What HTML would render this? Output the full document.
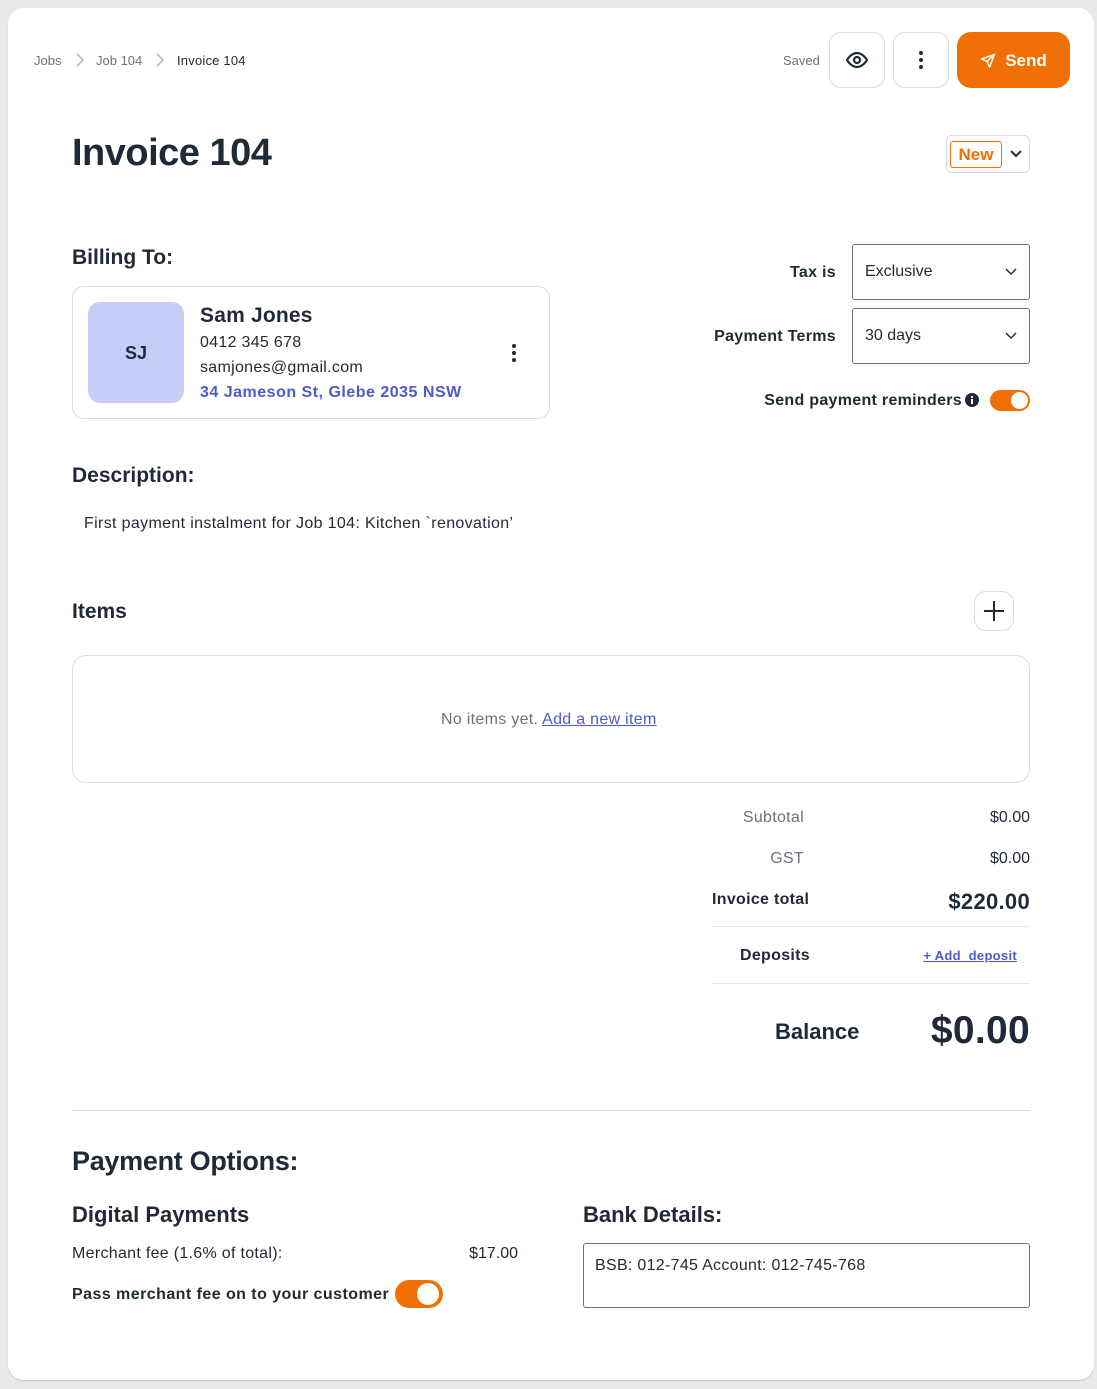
<!DOCTYPE html>
<html><head><meta charset="utf-8"><style>
*{box-sizing:border-box;margin:0;padding:0}
body{width:1097px;height:1389px;background:#e8e8ea;font-family:"Liberation Sans",Arial,sans-serif;color:#1f2937;position:relative;overflow:hidden}
.card{position:absolute;left:8px;top:8px;width:1086px;height:1372px;background:#fff;border-radius:16px;box-shadow:0 1px 1px #c8c8cc}
.a{position:absolute;white-space:nowrap}
.btn{position:absolute;border:1px solid #d9dbe0;border-radius:12px;background:#fff;display:flex;align-items:center;justify-content:center}
.sel{position:absolute;left:852px;width:178px;height:56px;border:1px solid #6b7280;border-radius:3px;font-size:16px;padding:0 12px;display:flex;align-items:center;justify-content:space-between;color:#1f2937}
.tog{position:absolute;background:#f07005;border-radius:20px}
.tog i{position:absolute;background:#fff;border-radius:50%}
.b{font-weight:bold}
.ls{letter-spacing:0.3px}
</style></head><body>
<div class="card"></div>
<div class="a" style="left:34px;top:53px;font-size:13px;color:#6b7280">Jobs</div>
<svg class="a" style="left:74px;top:52px" width="12" height="16"><path d="M3 2l6 6-6 6" stroke="#b0b4bb" stroke-width="1.5" fill="none"/></svg>
<div class="a" style="left:96px;top:53px;font-size:13px;color:#6b7280">Job 104</div>
<svg class="a" style="left:154px;top:52px" width="12" height="16"><path d="M3 2l6 6-6 6" stroke="#b0b4bb" stroke-width="1.5" fill="none"/></svg>
<div class="a" style="left:177px;top:53px;font-size:13px;color:#1f2937;letter-spacing:0.2px">Invoice 104</div>

<div class="a" style="left:783px;top:53px;font-size:13px;color:#6b7280">Saved</div>
<div class="btn" style="left:829px;top:32px;width:56px;height:56px"><svg width="24" height="24" viewBox="0 0 24 24"><path d="M2 12s4-7 10-7 10 7 10 7-4 7-10 7S2 12 2 12z" stroke="#1f2937" stroke-width="2.2" fill="none"/><circle cx="12" cy="12" r="3" stroke="#1f2937" stroke-width="2.2" fill="none"/></svg></div>
<div class="btn" style="left:893px;top:32px;width:56px;height:56px"><svg width="6" height="20"><circle cx="3" cy="3" r="2" fill="#1f2937"/><circle cx="3" cy="10" r="2" fill="#1f2937"/><circle cx="3" cy="17" r="2" fill="#1f2937"/></svg></div>
<div class="a" style="left:957px;top:32px;width:113px;height:56px;background:#f07005;border-radius:14px;color:#fff;font-size:17px;font-weight:bold;display:flex;align-items:center;justify-content:center;gap:9px;padding-top:1px"><svg width="16" height="16" viewBox="0 0 16 16"><path d="M14.5 1.5L1.5 6l5.5 2.5L9.5 14z M7 8.5L14.5 1.5" stroke="#fff" stroke-width="1.5" fill="none" stroke-linejoin="round"/></svg>Send</div>

<div class="a b" style="left:72px;top:132px;font-size:38px;letter-spacing:-0.5px;color:#1f2937">Invoice 104</div>
<div class="a" style="left:946px;top:135px;width:84px;height:38px;border:1px solid #d9dbe0;border-radius:6px"></div>
<div class="a b" style="left:950px;top:141px;width:52px;height:27px;border:1px solid #f07005;border-radius:3px;color:#f07005;font-size:17px;text-align:center;line-height:25px">New</div>
<svg class="a" style="left:1009px;top:149px" width="14" height="10"><path d="M2 2l5 5 5-5" stroke="#1f2937" stroke-width="2" fill="none"/></svg>

<div class="a b" style="left:72px;top:246px;font-size:21px">Billing To:</div>
<div class="a" style="left:72px;top:286px;width:478px;height:133px;border:1px solid #d9dbe0;border-radius:12px"></div>
<div class="a b" style="left:88px;top:302px;width:96px;height:101px;background:#c7cdf7;border-radius:12px;font-size:18px;display:flex;align-items:center;justify-content:center;padding-top:2px">SJ</div>
<div class="a b" style="left:200px;top:304px;font-size:21px;letter-spacing:0.2px">Sam Jones</div>
<div class="a ls" style="left:200px;top:334px;font-size:16px">0412 345 678</div>
<div class="a ls" style="left:200px;top:359px;font-size:16px">samjones@gmail.com</div>
<div class="a b" style="left:200px;top:384px;font-size:16px;color:#5059c9;letter-spacing:0.5px">34 Jameson St, Glebe 2035 NSW</div>
<svg class="a" style="left:510px;top:343px" width="8" height="20"><circle cx="4" cy="3" r="2" fill="#1f2937"/><circle cx="4" cy="10" r="2" fill="#1f2937"/><circle cx="4" cy="17" r="2" fill="#1f2937"/></svg>

<div class="a b ls" style="right:261px;top:264px;font-size:16px">Tax is</div>
<div class="sel" style="top:244px">Exclusive<svg width="12" height="8"><path d="M1 1l5 5 5-5" stroke="#1f2937" stroke-width="1.4" fill="none"/></svg></div>
<div class="a b ls" style="right:261px;top:328px;font-size:16px">Payment Terms</div>
<div class="sel" style="top:308px">30 days<svg width="12" height="8"><path d="M1 1l5 5 5-5" stroke="#1f2937" stroke-width="1.4" fill="none"/></svg></div>
<div class="a b ls" style="right:135px;top:392px;font-size:16px">Send payment reminders</div>
<svg class="a" style="left:965px;top:393px" width="14" height="14"><circle cx="7" cy="7" r="7" fill="#1f2937"/><rect x="6" y="6" width="2" height="5" fill="#fff"/><circle cx="7" cy="4" r="1.1" fill="#fff"/></svg>
<div class="tog" style="left:990px;top:390px;width:40px;height:21px"><i style="left:21px;top:2px;width:17px;height:17px"></i></div>

<div class="a b" style="left:72px;top:464px;font-size:21px">Description:</div>
<div class="a" style="left:84px;top:515px;font-size:16px;letter-spacing:0.35px">First payment instalment for Job 104: Kitchen `renovation’</div>

<div class="a b" style="left:72px;top:600px;font-size:21px">Items</div>
<div class="btn" style="left:974px;top:591px;width:40px;height:40px;border-radius:12px"><svg width="22" height="22"><path d="M11 1v20M1 11h20" stroke="#1f2937" stroke-width="2"/></svg></div>
<div class="a" style="left:72px;top:655px;width:958px;height:128px;border:1px solid #d9dbe0;border-radius:14px"></div>
<div class="a" style="left:441px;top:711px;font-size:16px;color:#6b7280;letter-spacing:0.3px">No items yet. <span style="color:#5059c9;text-decoration:underline">Add a new item</span></div>

<div class="a ls" style="right:293px;top:809px;font-size:16px;color:#6b7280">Subtotal</div>
<div class="a" style="right:67px;top:809px;font-size:16px">$0.00</div>
<div class="a ls" style="right:293px;top:850px;font-size:16px;color:#6b7280">GST</div>
<div class="a" style="right:67px;top:850px;font-size:16px">$0.00</div>
<div class="a b ls" style="left:712px;top:891px;font-size:16px">Invoice total</div>
<div class="a b" style="right:67px;top:889px;font-size:22px;letter-spacing:0.3px">$220.00</div>
<div class="a" style="left:712px;top:926px;width:318px;height:1px;background:#e5e7eb"></div>
<div class="a b ls" style="left:740px;top:947px;font-size:16px">Deposits</div>
<div class="a b" style="right:80px;top:948px;font-size:13px;color:#5059c9;text-decoration:underline;letter-spacing:0.3px">+ Add&nbsp; deposit</div>
<div class="a" style="left:712px;top:983px;width:318px;height:1px;background:#e5e7eb"></div>
<div class="a b" style="left:775px;top:1019px;font-size:22px">Balance</div>
<div class="a b" style="right:67px;top:1009px;font-size:39px;letter-spacing:0.3px">$0.00</div>

<div class="a" style="left:72px;top:1110px;width:958px;height:1px;background:#d9dbe0"></div>
<div class="a b" style="left:72px;top:1146px;font-size:27px;letter-spacing:-0.3px">Payment Options:</div>
<div class="a b" style="left:72px;top:1202px;font-size:22px">Digital Payments</div>
<div class="a ls" style="left:72px;top:1245px;font-size:16px">Merchant fee (1.6% of total):</div>
<div class="a" style="right:579px;top:1245px;font-size:16px">$17.00</div>
<div class="a b" style="left:72px;top:1286px;font-size:16px;letter-spacing:0.45px">Pass merchant fee on to your customer</div>
<div class="tog" style="left:395px;top:1280px;width:48px;height:28px"><i style="left:22px;top:3px;width:22px;height:22px"></i></div>
<div class="a b" style="left:583px;top:1202px;font-size:22px">Bank Details:</div>
<div class="a ls" style="left:583px;top:1243px;width:447px;height:65px;border:1px solid #6b7280;border-radius:3px;padding:13px 11px;font-size:16px">BSB: 012-745 Account: 012-745-768</div>
</body></html>
